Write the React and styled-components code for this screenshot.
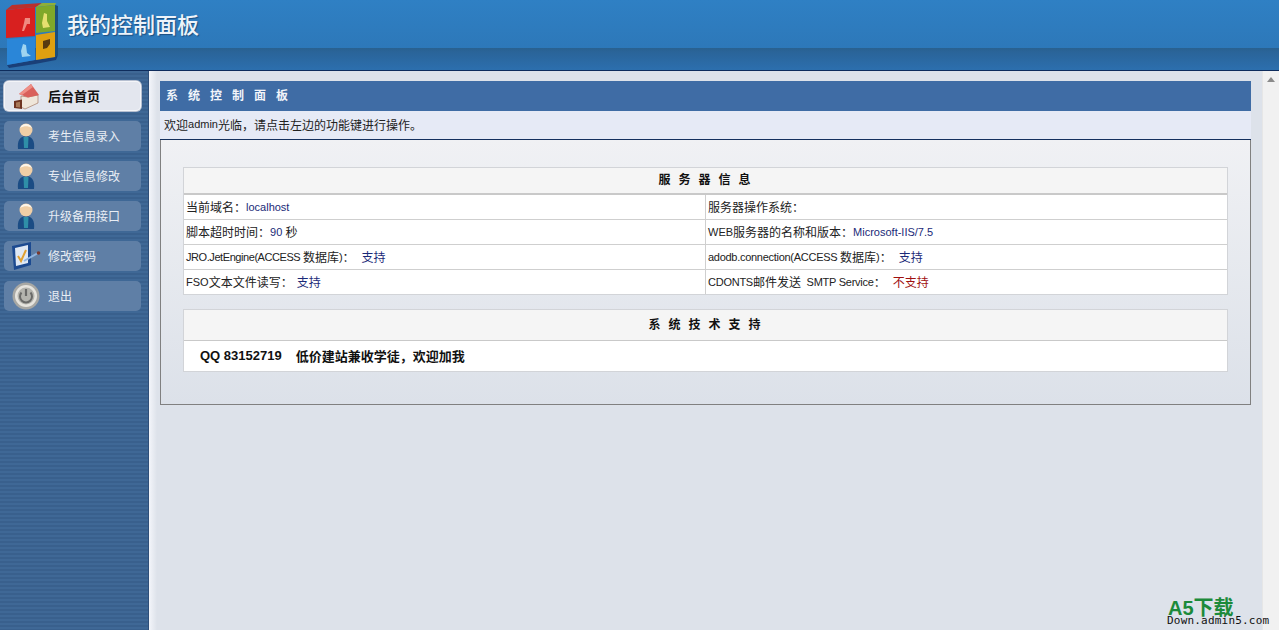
import React from "react";
import styled, { createGlobalStyle } from "styled-components";

const FONT = `"Liberation Sans", "Noto Sans CJK SC", sans-serif`;

const GlobalStyle = createGlobalStyle`
  html, body {
    margin: 0;
    height: 630px;
    overflow: hidden;
    background: #fff;
    font-family: ${FONT};
    font-size: 12px;
    color: #222;
  }
`;

const Page = styled.div`
  position: relative;
  width: 1279px;
  height: 630px;
  display: flex;
  flex-direction: column;
`;

const Header = styled.header`
  height: 71px;
  flex: none;
  display: flex;
  align-items: flex-start;
  padding-left: 4px;
  box-sizing: border-box;
  background: linear-gradient(#2f80c4 0, #2d78b9 48px, #29618f 48px, #2a6499 52px, #2c6fae 70px);
  border-bottom: 1px solid #0e2c5c;
`;

const LogoMark = styled.svg`
  width: 54px;
  height: 66px;
  margin-top: 2px;
  flex: none;
`;

const SiteTitle = styled.h1`
  margin: 13px 0 0 9px;
  font-size: 22px;
  line-height: 26px;
  font-weight: 500;
  color: #eef4fa;
  text-shadow: 1px 1px 1px #1d4f80;
`;

const Body = styled.div`
  flex: 1;
  min-height: 0;
  display: flex;
`;

const Sidebar = styled.nav`
  width: 149px;
  flex: none;
  box-sizing: border-box;
  padding: 10px 7px 0 4px;
  display: flex;
  flex-direction: column;
  gap: 10px;
  background: repeating-linear-gradient(#3f6896 0, #3f6896 2px, #39608d 2px, #39608d 4px);
  border-right: 1px solid #2e4f7a;
`;

const NavItem = styled.a`
  height: 30px;
  display: flex;
  align-items: center;
  border-radius: 5px;
  background: ${(p) => (p.$active ? "#e3e6ee" : "#5f7fa6")};
  color: ${(p) => (p.$active ? "#111" : "#e8edf4")};
  font-size: ${(p) => (p.$active ? "13px" : "12px")};
  font-weight: ${(p) => (p.$active ? 700 : 400)};
  box-shadow: ${(p) => (p.$active ? "0 0 0 1px #b6bfd0, inset 0 0 0 1px #f4f5f8" : "none")};
`;

const NavIcon = styled.span`
  width: 44px;
  height: 30px;
  flex: none;
  display: flex;
  align-items: center;
  justify-content: center;
  overflow: visible;
`;

const NavLabel = styled.span`
  margin-bottom: 2px;
`;

const Main = styled.main`
  flex: 1;
  min-width: 0;
  box-sizing: border-box;
  padding: 10px 11px 0 11px;
  background: linear-gradient(90deg, #f3f5fa 0, #dde2ea 8px);
`;

const Scrollbar = styled.div`
  width: 17px;
  flex: none;
  background: #f1f1f1;
  border-left: 1px solid #e6e6e6;
  display: flex;
  justify-content: center;
  padding-top: 6px;
  box-sizing: border-box;
`;

const ScrollArrow = styled.span`
  width: 0;
  height: 0;
  border-left: 4px solid transparent;
  border-right: 4px solid transparent;
  border-bottom: 5px solid #8a8a8a;
`;

const Panel = styled.section`
  width: 1091px;
`;

const PanelTitle = styled.h2`
  margin: 0;
  height: 30px;
  box-sizing: border-box;
  padding: 0 0 4px 6px;
  display: flex;
  align-items: center;
  background: #3f6ca5;
  color: #f2f5fa;
  font-size: 12px;
  font-weight: 700;
  letter-spacing: 10px;
`;

const Welcome = styled.div`
  height: 29px;
  box-sizing: border-box;
  padding: 0 0 2px 4px;
  display: flex;
  align-items: center;
  white-space: pre;
  background: #e6eaf6;
  border-bottom: 1px solid #14305e;
  color: #222;
`;

const PanelBody = styled.div`
  height: 265px;
  box-sizing: border-box;
  padding: 27px 22px 0 22px;
  border: 1px solid #808080;
  border-top: 0;
  background: linear-gradient(#f0f1f4 0, #dce1e9 100%);
  display: flex;
  flex-direction: column;
  gap: 14px;
`;

const InfoTable = styled.div`
  border: 1px solid #d2d4d8;
  background: #fff;
`;

const TableHead = styled.div`
  height: ${(p) => p.$height}px;
  box-sizing: content-box;
  display: flex;
  align-items: center;
  justify-content: center;
  padding-left: 6px;
  background: #f5f5f5;
  font-weight: 700;
  color: #111;
  letter-spacing: 8px;
  border-bottom: ${(p) => p.$rule}px solid #c9c9c9;
`;

const HeadText = styled.span`
  margin-bottom: ${(p) => p.$lift}px;
`;

const Row = styled.div`
  height: 25px;
  box-sizing: border-box;
  display: grid;
  grid-template-columns: 521px 1fr;
  border-bottom: 1px solid #cfcfcf;
  &:last-child {
    height: 24px;
    border-bottom: 0;
  }
`;

const Cell = styled.div`
  display: flex;
  align-items: center;
  padding: 0 0 1px 2px;
  white-space: pre;
  & + & {
    border-left: 1px solid #cfcfcf;
  }
`;

const Latin = styled.span`
  font-size: 11px;
  letter-spacing: ${(p) => p.$tight || 0}px;
`;

const Value = styled.span`
  color: ${(p) => (p.$error ? "#a01010" : "#1a2a78")};
  margin-left: ${(p) => p.$gap || 0}px;
`;

const Contact = styled.div`
  height: 30px;
  box-sizing: border-box;
  display: flex;
  align-items: center;
  padding: 0 0 1px 16px;
  font-size: 13px;
  font-weight: 700;
  color: #111;
  gap: 14px;
`;

const Watermark = styled.div`
  position: absolute;
  right: 0;
  bottom: 4px;
  width: 112px;
  font-weight: 700;
`;

const WatermarkBrand = styled.div`
  font-size: 20px;
  line-height: 13px;
  color: #1c8a3a;
  padding-left: 1px;
`;

const WatermarkUrl = styled.div`
  font-family: "DejaVu Sans Mono", monospace;
  font-size: 11px;
  line-height: 11px;
  font-weight: 400;
  color: #111;
  letter-spacing: 0.2px;
`;

const Logo = () => (
  <LogoMark viewBox="4 2 54 66">
    <path d="M6 10 L12 5 L42 3 L36 7 Z" fill="#b9302c" />
    <path d="M36 7 L42 3 L56 3 L55 5 Z" fill="#8fae3a" />
    <path d="M55 5 L58 6 L58 55 L55 57 Z" fill="#1c4f7c" />
    <path d="M7 65 L35 60 L55 57 L58 55 L56 60 L35 64 L9 68 Z" fill="#1a3f78" />
    <path d="M6 10 L35 7 L35 36 L6 38 Z" fill="#d8201f" />
    <path d="M36 7 L55 5 L55 31 L36 33 Z" fill="#7fa82a" />
    <path d="M7 39 L35 37 L35 60 L7 65 Z" fill="#2a86d8" />
    <path d="M36 35 L55 32 L55 57 L36 60 Z" fill="#e0a010" />
    <path d="M25 18 h5 v6 h-3 l-3 7 h-2 l2 -8 Z" fill="#f08a80" />
    <path d="M44 13 l3 1 v7 l3 6 l-7 1 l-1 -5 Z" fill="#e6e070" />
    <path d="M23 44 l3 1 l1 8 l4 3 l-9 1 l-1 -6 Z" fill="#9fd4f0" />
    <path d="M43 41 l7 -2 v5 l-3 4 l-4 1 Z" fill="#5a3a10" />
  </LogoMark>
);

const House = () => (
  <svg width="30" height="27" viewBox="0 0 30 27">
    <path d="M10 13 L17 14 L27 12 V20 L14 26 L10 24 Z" fill="#efe6da" stroke="#9a6a50" strokeWidth="0.6" />
    <path d="M8 11 L20 1 L28 12 L17 14.500 Z" fill="#d9605a" />
    <path d="M8 11 L20 1 L22 4 L11 12 Z" fill="#ee8f86" />
    <path d="M3 18 L11 16.500 V26 L3 25 Z" fill="#6e3422" />
    <path d="M5 19.500 L9 18.800 V24.500 L5 24 Z" fill="#a87858" />
  </svg>
);

const Person = () => (
  <svg width="20" height="27" viewBox="0 0 20 27">
    <path d="M2 26 C1 18 4 13 10 13 C16 13 19 18 18 26 Z" fill="#1b4c84" />
    <path d="M7.500 14 L12.500 14 L12 25 L8 25 Z" fill="#2f8fa8" />
    <circle cx="10" cy="7" r="6.500" fill="#f0cfa6" />
    <path d="M4 5 A6.500 6.500 0 0 1 16 5 C12 2.500 8 2.500 4 5 Z" fill="#fdf6ea" />
  </svg>
);

const Checklist = () => (
  <svg width="32" height="30" viewBox="0 0 32 30">
    <path d="M2 5 L21 1 V24 L4 29 Z" fill="#1c4a90" />
    <path d="M5 7 L18 4 V22 L6 25 Z" fill="#dfe8f4" />
    <path d="M8 15 L11 20 L16 9" fill="none" stroke="#e0a030" strokeWidth="2" />
    <path d="M14 20 L28 12" stroke="#8fb4e0" strokeWidth="2" />
    <circle cx="28.500" cy="12" r="1.800" fill="#7a3a30" />
  </svg>
);

const Power = () => (
  <svg width="28" height="28" viewBox="0 0 28 28">
    <circle cx="14" cy="14" r="13.500" fill="#a8a8a4" />
    <circle cx="14" cy="14" r="11" fill="#e6e4de" />
    <circle cx="14" cy="14" r="8.500" fill="#b4b4ae" />
    <path d="M9.500 10.500 A6 6 0 1 0 18.500 10.500" fill="none" stroke="#6a6a68" strokeWidth="2" />
    <path d="M14 7 V14" stroke="#6a6a68" strokeWidth="2.200" />
  </svg>
);

const NAV = [
  { label: "后台首页", icon: <House />, active: true },
  { label: "考生信息录入", icon: <Person /> },
  { label: "专业信息修改", icon: <Person /> },
  { label: "升级备用接口", icon: <Person /> },
  { label: "修改密码", icon: <Checklist /> },
  { label: "退出", icon: <Power /> },
];

const App = () => (
  <Page>
    <GlobalStyle />
    <Header>
      <Logo />
      <SiteTitle>我的控制面板</SiteTitle>
    </Header>
    <Body>
      <Sidebar>
        {NAV.map((item) => (
          <NavItem key={item.label} $active={item.active}>
            <NavIcon>{item.icon}</NavIcon>
            <NavLabel>{item.label}</NavLabel>
          </NavItem>
        ))}
      </Sidebar>
      <Main>
        <Panel>
          <PanelTitle>系统控制面板</PanelTitle>
          <Welcome>欢迎<Latin>admin</Latin>光临，请点击左边的功能键进行操作。</Welcome>
          <PanelBody>
            <InfoTable>
              <TableHead $height={25} $rule={2}><HeadText $lift={4}>服务器信息</HeadText></TableHead>
              <Row>
                <Cell>当前域名：<Value><Latin>localhost</Latin></Value></Cell>
                <Cell>服务器操作系统：</Cell>
              </Row>
              <Row>
                <Cell>脚本超时时间：<Value><Latin>90</Latin></Value> 秒</Cell>
                <Cell><Latin>WEB</Latin>服务器的名称和版本：<Value><Latin>Microsoft-IIS/7.5</Latin></Value></Cell>
              </Row>
              <Row>
                <Cell><Latin $tight={-0.43}>JRO.JetEngine(ACCESS </Latin>数据库<Latin>)</Latin>：<Value $gap={7}>支持</Value></Cell>
                <Cell><Latin $tight={-0.28}>adodb.connection(ACCESS </Latin>数据库<Latin>)</Latin>：<Value $gap={7}>支持</Value></Cell>
              </Row>
              <Row>
                <Cell><Latin>FSO</Latin>文本文件读写：<Value $gap={4}>支持</Value></Cell>
                <Cell><Latin $tight={-0.25}>CDONTS</Latin>邮件发送<Latin $tight={-0.25}>  SMTP Service</Latin>：<Value $gap={7} $error>不支持</Value></Cell>
              </Row>
            </InfoTable>
            <InfoTable>
              <TableHead $height={30} $rule={1}><HeadText $lift={4}>系统技术支持</HeadText></TableHead>
              <Contact>
                <span>QQ 83152719</span>
                <span>低价建站兼收学徒，欢迎加我</span>
              </Contact>
            </InfoTable>
          </PanelBody>
        </Panel>
      </Main>
      <Scrollbar><ScrollArrow /></Scrollbar>
    </Body>
    <Watermark>
      <WatermarkBrand>A5下载</WatermarkBrand>
      <WatermarkUrl>Down.admin5.com</WatermarkUrl>
    </Watermark>
  </Page>
);

export default App;
